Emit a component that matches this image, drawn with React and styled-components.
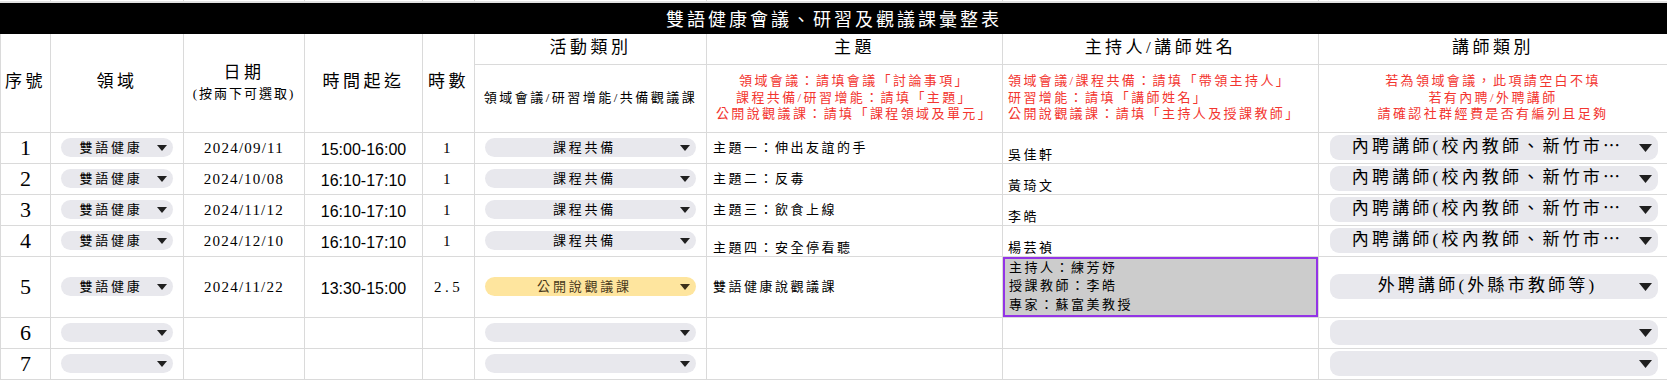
import React from 'react'
import styled, { createGlobalStyle } from 'styled-components'

const GlobalStyle = createGlobalStyle`
  html, body {
    margin: 0;
    padding: 0;
    background: #fff;
  }
  body {
    font-family: "Liberation Serif", "Noto Sans CJK TC", serif;
    color: #000;
    overflow: hidden;
  }
`

const GRID = '#dadada'

const Sheet = styled.table`
  border-collapse: collapse;
  table-layout: fixed;
  width: 1667px;
`

const Row = styled.tr`
  height: ${({h}) => h}px;
`

const Cell = styled.td`
  border: 1px solid ${GRID};
  padding: 0 ${({pad}) => pad || 0}px;
  text-align: ${({align}) => align || 'center'};
  vertical-align: ${({valign}) => valign || 'middle'};
  font-size: 13px;
  letter-spacing: 2.5px;
  white-space: nowrap;
  overflow: hidden;
  line-height: 1.2;
`

const Strip = styled.td`
  border-bottom: 2px solid #e2e2e2;
  border-right: 1px solid ${GRID};
  height: 0;
  padding: 0;
`

const TitleCell = styled.td`
  background: #000;
  color: #fff;
  text-align: center;
  font-size: 18px;
  letter-spacing: 3px;
  padding: 0;
  border: 1px solid #000;
`

const HeadCell = styled(Cell)`
  font-size: 17px;
  letter-spacing: 3.5px;
`

const SubHead = styled.div`
  font-size: 13px;
  letter-spacing: 2px;
  margin-top: 3px;
`

const Note = styled.div`
  color: #f3352f;
  font-size: 13px;
  letter-spacing: 2.4px;
  line-height: 16.5px;
`

const NumCell = styled(Cell)`
  font-size: 22px;
  letter-spacing: 0;
  padding-top: 2px;
`

const DateCell = styled(Cell)`
  font-size: 15px;
  letter-spacing: 1.2px;
`

const TimeCell = styled(Cell)`
  font-family: "Liberation Sans", Arial, sans-serif;
  font-size: 16px;
  letter-spacing: 0;
  padding-top: 4px;
`

const HourCell = styled(Cell)`
  font-size: 15px;
  letter-spacing: 3.5px;
`

const SelectedCell = styled(Cell)`
  background: #cccccc;
  box-shadow: inset 0 0 0 2px #9334e6;
  line-height: 18.5px;
  padding-left: 6px;
`

const Chip = styled.div`
  display: flex;
  align-items: center;
  height: ${({size}) => size === 'lg' ? 25 : 19}px;
  margin: ${({size}) => size === 'lg' ? '0 9px 0 11px' : '0 10px'};
  padding: ${({size}) => size === 'lg' ? '0 6px 0 12px' : '0 6px 0 10px'};
  border-radius: ${({size}) => size === 'lg' ? 9 : 10}px;
  background: ${({tone}) => tone === 'yellow' ? '#fee59e' : '#e8e8ed'};
  color: ${({tone}) => tone === 'yellow' ? '#4a3a1c' : '#000'};
  font-size: ${({size}) => size === 'lg' ? 17 : 13}px;
  letter-spacing: ${({size}) => size === 'lg' ? 3.2 : 2.8}px;
`

const ChipLabel = styled.span`
  flex: 1;
  min-width: 0;
  text-align: center;
  white-space: nowrap;
`

const Caret = ({size, color}) => {
  const w = size === 'lg' ? 13 : 10
  const h = size === 'lg' ? 8 : 6
  return (
    <svg width={w} height={h} viewBox="0 0 10 6" style={{flexShrink: 0, marginLeft: 6}}>
      <path d="M0 0 L10 0 L5 6 Z" fill={color || '#1f1f1f'} />
    </svg>
  )
}

const Dropdown = ({value, tone, size}) => (
  <Chip tone={tone} size={size}>
    <ChipLabel>{value}</ChipLabel>
    <Caret size={size} color={tone === 'yellow' ? '#3d3018' : undefined} />
  </Chip>
)

const widths = [50, 133, 121, 118, 52, 232, 296, 316, 349]

// the sheet shows this value already clipped
const INNER = '內聘講師(校內教師、新竹市⋯'

const rows = [
  { no: 1, area: '雙語健康', date: '2024/09/11', time: '15:00-16:00', hours: '1', kind: '課程共備', topic: '主題一：伸出友誼的手', host: '吳佳軒', teacher: INNER },
  { no: 2, area: '雙語健康', date: '2024/10/08', time: '16:10-17:10', hours: '1', kind: '課程共備', topic: '主題二：反毒', host: '黃琦文', teacher: INNER },
  { no: 3, area: '雙語健康', date: '2024/11/12', time: '16:10-17:10', hours: '1', kind: '課程共備', topic: '主題三：飲食上線', host: '李皓', teacher: INNER },
  { no: 4, area: '雙語健康', date: '2024/12/10', time: '16:10-17:10', hours: '1', kind: '課程共備', topic: '主題四：安全停看聽', topicLow: true, host: '楊芸禎', teacher: INNER },
]

const App = () => {
  return (
    <>
      <GlobalStyle />
      <Sheet>
        <colgroup>
          {widths.map((w, i) => <col key={i} style={{width: w}} />)}
        </colgroup>
        <tbody>
          <Row h={2}>
            {widths.map((w, i) => <Strip key={i} />)}
          </Row>
          <Row h={31}>
            <TitleCell colSpan={9}>雙語健康會議、研習及觀議課彙整表</TitleCell>
          </Row>
          <Row h={31}>
            <HeadCell rowSpan={2}>序號</HeadCell>
            <HeadCell rowSpan={2}>領域</HeadCell>
            <HeadCell rowSpan={2}>
              日期
              <SubHead>(按兩下可選取)</SubHead>
            </HeadCell>
            <HeadCell rowSpan={2}>時間起迄</HeadCell>
            <HeadCell rowSpan={2}>時數</HeadCell>
            <HeadCell>活動類別</HeadCell>
            <HeadCell>主題</HeadCell>
            <HeadCell>主持人/講師姓名</HeadCell>
            <HeadCell>講師類別</HeadCell>
          </Row>
          <Row h={68}>
            <Cell>領域會議/研習增能/共備觀議課</Cell>
            <Cell>
              <Note>領域會議：請填會議「討論事項」</Note>
              <Note>課程共備/研習增能：請填「主題」</Note>
              <Note>公開說觀議課：請填「課程領域及單元」</Note>
            </Cell>
            <Cell align="left" pad={5}>
              <Note>領域會議/課程共備：請填「帶領主持人」</Note>
              <Note>研習增能：請填「講師姓名」</Note>
              <Note>公開說觀議課：請填「主持人及授課教師」</Note>
            </Cell>
            <Cell>
              <Note>若為領域會議，此項請空白不填</Note>
              <Note>若有內聘/外聘講師</Note>
              <Note>請確認社群經費是否有編列且足夠</Note>
            </Cell>
          </Row>
          {rows.map((r) => (
            <Row h={31} key={r.no}>
              <NumCell>{r.no}</NumCell>
              <Cell><Dropdown value={r.area} /></Cell>
              <DateCell>{r.date}</DateCell>
              <TimeCell>{r.time}</TimeCell>
              <HourCell>{r.hours}</HourCell>
              <Cell><Dropdown value={r.kind} /></Cell>
              <Cell align="left" pad={6} valign={r.topicLow ? 'bottom' : 'middle'}>{r.topic}</Cell>
              <Cell align="left" pad={5} valign="bottom">{r.host}</Cell>
              <Cell><Dropdown value={r.teacher} size="lg" /></Cell>
            </Row>
          ))}
          <Row h={61}>
            <NumCell>5</NumCell>
            <Cell><Dropdown value="雙語健康" /></Cell>
            <DateCell>2024/11/22</DateCell>
            <TimeCell>13:30-15:00</TimeCell>
            <HourCell>2.5</HourCell>
            <Cell><Dropdown value="公開說觀議課" tone="yellow" /></Cell>
            <Cell align="left" pad={6}>雙語健康說觀議課</Cell>
            <SelectedCell align="left">
              <div>主持人：練芳妤</div>
              <div>授課教師：李皓</div>
              <div>專家：蘇富美教授</div>
            </SelectedCell>
            <Cell><Dropdown value="外聘講師(外縣市教師等)" size="lg" /></Cell>
          </Row>
          {[6, 7].map((n) => (
            <Row h={31} key={n}>
              <NumCell>{n}</NumCell>
              <Cell><Dropdown value="" /></Cell>
              <Cell />
              <Cell />
              <Cell />
              <Cell><Dropdown value="" /></Cell>
              <Cell />
              <Cell />
              <Cell><Dropdown value="" size="lg" /></Cell>
            </Row>
          ))}
        </tbody>
      </Sheet>
    </>
  )
}

export default App
